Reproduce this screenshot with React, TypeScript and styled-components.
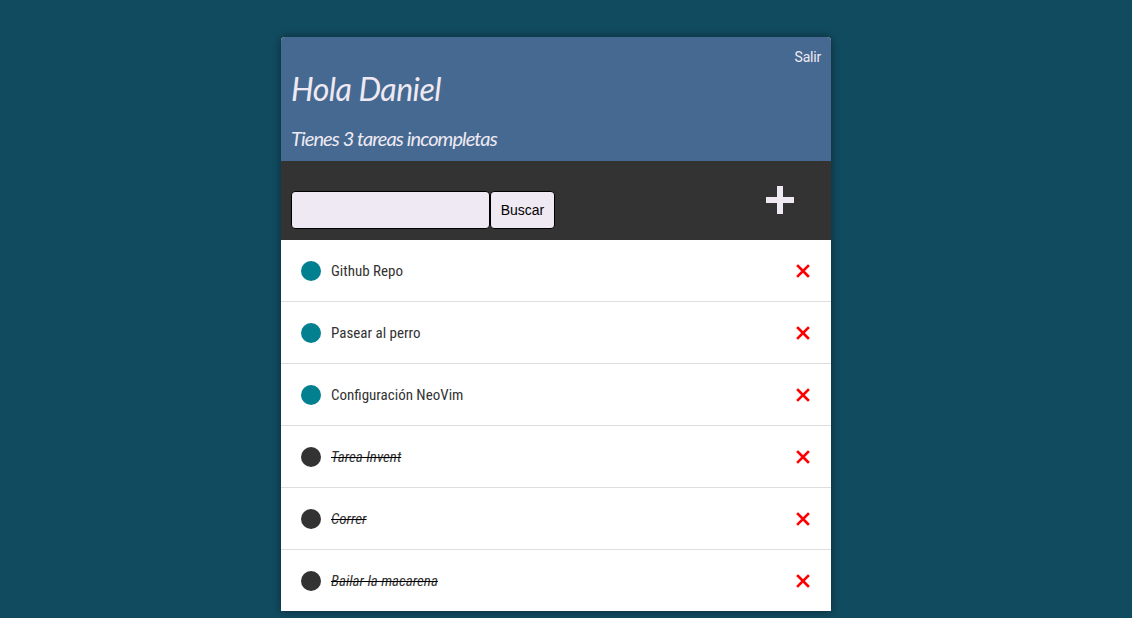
import React from "react";
import styled, { createGlobalStyle } from "styled-components";

const Global = createGlobalStyle`
  html, body { margin: 0; padding: 0; }
  body { background: #114b5f; font-family: "Lato", sans-serif; }
`;

const Page = styled.div`
  display: flex;
  justify-content: center;
  align-items: flex-start;
  padding: 37px 20px 0 0;
  min-height: 618px;
  box-sizing: border-box;
`;

const Card = styled.div`
  width: 550px;
  border-radius: 4px 4px 0 0;
  overflow: hidden;
  background: #fff;
  box-shadow: 0 0 8px rgba(0, 0, 0, 0.45);
`;

const Header = styled.header`
  background: #456990;
  height: 124px;
  box-sizing: border-box;
  padding: 12px 10px 0 10px;
  display: flex;
  flex-direction: column;
  color: #efe9f4;
`;

const TopRow = styled.div`
  display: flex;
  justify-content: flex-end;
`;

const Logout = styled.span`
  font-family: "Roboto", sans-serif;
  font-weight: 400;
  font-size: 14px;
  line-height: 16px;
  letter-spacing: -0.2px;
`;

const Title = styled.h1`
  margin: 5px 0 0 0;
  font-family: "Lato", sans-serif;
  font-style: italic;
  font-weight: 400;
  font-size: 32px;
  letter-spacing: -0.5px;
  line-height: 38px;
`;

const Subtitle = styled.h2`
  margin: 18px 0 0 0;
  font-family: "Lato", sans-serif;
  font-style: italic;
  font-weight: 400;
  font-size: 20px;
  letter-spacing: -0.9px;
  line-height: 24px;
`;

const Toolbar = styled.div`
  background: #333333;
  height: 79px;
  box-sizing: border-box;
  padding: 30px 37px 0 10px;
  display: flex;
  align-items: flex-start;
  justify-content: space-between;
`;

const SearchForm = styled.form`
  display: flex;
  margin: 0;
`;

const SearchInput = styled.input`
  width: 199px;
  height: 38px;
  box-sizing: border-box;
  background: #efe9f4;
  border: 1px solid #000;
  border-radius: 4px;
  padding: 0 6px;
  font-family: "Liberation Sans", Arial, sans-serif;
  font-size: 14px;
  outline: none;
`;

const SearchButton = styled.button`
  width: 65px;
  height: 38px;
  box-sizing: border-box;
  background: #efe9f4;
  border: 1px solid #000;
  border-radius: 4px;
  font-family: "Liberation Sans", Arial, sans-serif;
  font-size: 14px;
  color: #000;
  padding: 0;
`;

const AddButton = styled.button`
  background: none;
  border: none;
  padding: 0;
  margin-top: -5px;
  width: 28px;
  height: 28px;
  display: flex;
  cursor: pointer;
`;

const List = styled.ul`
  list-style: none;
  margin: 0;
  padding: 0;
`;

const Item = styled.li`
  height: 62px;
  box-sizing: border-box;
  border-bottom: 1px solid #dddddd;
  display: flex;
  align-items: center;
  padding: 0 21px 0 20px;
  &:last-child { border-bottom: none; height: 61px; }
`;

const Dot = styled.span<{ $done: boolean }>`
  width: 20px;
  height: 20px;
  border-radius: 50%;
  background: ${(p) => (p.$done ? "#333333" : "#028090")};
  flex: none;
`;

const Label = styled.span<{ $done: boolean }>`
  margin-left: 10px;
  flex: 1;
  font-family: "Liberation Sans Narrow", "Roboto Condensed", "Roboto", sans-serif;
  font-size: 15px;
  color: #333;
  font-style: ${(p) => (p.$done ? "italic" : "normal")};
  text-decoration: ${(p) => (p.$done ? "line-through" : "none")};
  text-decoration-color: #000;
`;

const Delete = styled.button`
  background: none;
  border: none;
  padding: 0;
  width: 14px;
  height: 14px;
  display: flex;
  cursor: pointer;
`;

const tasks = [
  { text: "Github Repo", done: false },
  { text: "Pasear al perro", done: false },
  { text: "Configuración NeoVim", done: false },
  { text: "Tarea Invent", done: true },
  { text: "Correr", done: true },
  { text: "Bailar la macarena", done: true },
];

const PlusIcon = () => (
  <svg width="28" height="28" viewBox="0 0 28 28">
    <rect x="11" y="0" width="6" height="28" fill="#efe9f4" />
    <rect x="0" y="11" width="28" height="6" fill="#efe9f4" />
  </svg>
);

const CrossIcon = () => (
  <svg width="14" height="14" viewBox="0 0 14 14">
    <path d="M2 2 L12 12 M12 2 L2 12" stroke="#ff0000" strokeWidth="2.6" strokeLinecap="square" />
  </svg>
);

export default function App() {
  const pending = tasks.filter((t) => !t.done).length;
  return (
    <>
      <Global />
      <Page>
        <Card>
          <Header>
            <TopRow>
              <Logout>Salir</Logout>
            </TopRow>
            <Title>Hola Daniel</Title>
            <Subtitle>Tienes {pending} tareas incompletas</Subtitle>
          </Header>
          <Toolbar>
            <SearchForm onSubmit={(e) => e.preventDefault()}>
              <SearchInput type="text" />
              <SearchButton type="submit">Buscar</SearchButton>
            </SearchForm>
            <AddButton aria-label="Agregar">
              <PlusIcon />
            </AddButton>
          </Toolbar>
          <List>
            {tasks.map((t) => (
              <Item key={t.text}>
                <Dot $done={t.done} />
                <Label $done={t.done}>{t.text}</Label>
                <Delete aria-label="Eliminar">
                  <CrossIcon />
                </Delete>
              </Item>
            ))}
          </List>
        </Card>
      </Page>
    </>
  );
}
